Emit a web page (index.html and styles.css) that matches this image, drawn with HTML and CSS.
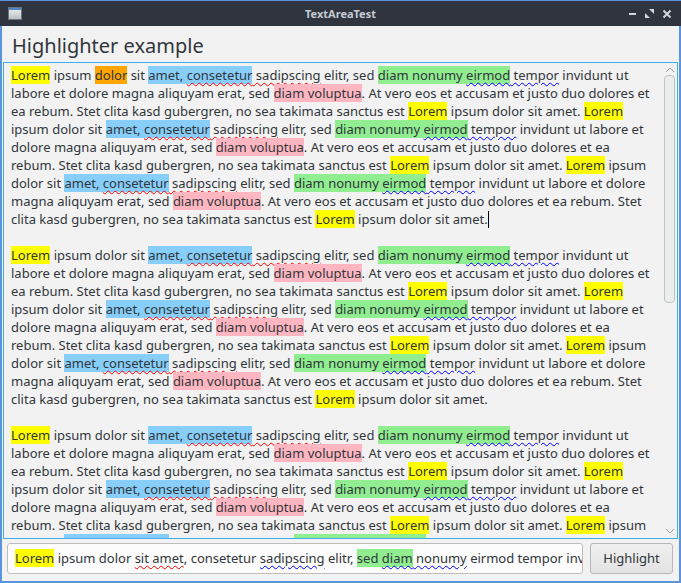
FILE: index.html
```html
<!DOCTYPE html>
<html>
<head>
<meta charset="utf-8">
<link rel="stylesheet" href="styles.css">
</head>
<body>
<div class="window">
  <div class="titlebar">
    <div class="tleft">
      <svg class="appicon" width="14" height="13" viewBox="0 0 14 13">
        <defs><linearGradient id="g" x1="0" y1="0" x2="0" y2="1"><stop offset="0" stop-color="#f4f4f4"/><stop offset="1" stop-color="#b9bcc0"/></linearGradient></defs>
        <rect x="0.5" y="0.5" width="13" height="12" fill="url(#g)" stroke="#6d7480"/>
        <rect x="1" y="1" width="12" height="2" fill="#4f86c6"/>
      </svg>
    </div>
    <div class="title">TextAreaTest</div>
    <div class="wbtns">
      <svg width="9" height="9" viewBox="0 0 9 9"><rect x="1" y="4" width="7" height="2" fill="#d3d7de"/></svg>
      <svg width="9" height="9" viewBox="0 0 9 9"><polygon points="4,0 9,0 9,5" fill="#d3d7de"/><polygon points="0,4 0,9 5,9" fill="#d3d7de"/></svg>
      <svg width="10" height="10" viewBox="0 0 10 10"><path d="M1.5 1.5 L8.5 8.5 M8.5 1.5 L1.5 8.5" stroke="#d3d7de" stroke-width="2"/></svg>
    </div>
  </div>
  <div class="content">
    <h1 class="heading">Highlighter example</h1>
    <div class="textarea">
      <div class="doc">
        <div class="ln"><span class="y">Lorem</span> ipsum <span class="o">dolor</span> sit <span class="b">amet, <span class="sr">consetetur</span></span><span class="sr"> sadipscing</span> elitr, sed <span class="g">diam nonumy <span class="sb">eirmod</span></span><span class="sb"> tempor</span> invidunt ut</div>
        <div class="ln">labore et dolore magna aliquyam erat, sed <span class="p">diam voluptua</span>. At vero eos et accusam et justo duo dolores et</div>
        <div class="ln">ea rebum. Stet clita kasd gubergren, no sea takimata sanctus est <span class="y">Lorem</span> ipsum dolor sit amet. <span class="y">Lorem</span></div>
        <div class="ln">ipsum dolor sit <span class="b">amet, <span class="sr">consetetur</span></span><span class="sr"> sadipscing</span> elitr, sed <span class="g">diam nonumy <span class="sb">eirmod</span></span><span class="sb"> tempor</span> invidunt ut labore et</div>
        <div class="ln">dolore magna aliquyam erat, sed <span class="p">diam voluptua</span>. At vero eos et accusam et justo duo dolores et ea</div>
        <div class="ln">rebum. Stet clita kasd gubergren, no sea takimata sanctus est <span class="y">Lorem</span> ipsum dolor sit amet. <span class="y">Lorem</span> ipsum</div>
        <div class="ln">dolor sit <span class="b">amet, <span class="sr">consetetur</span></span><span class="sr"> sadipscing</span> elitr, sed <span class="g">diam nonumy <span class="sb">eirmod</span></span><span class="sb"> tempor</span> invidunt ut labore et dolore</div>
        <div class="ln">magna aliquyam erat, sed <span class="p">diam voluptua</span>. At vero eos et accusam et justo duo dolores et ea rebum. Stet</div>
        <div class="ln">clita kasd gubergren, no sea takimata sanctus est <span class="y">Lorem</span> ipsum dolor sit amet.<span class="caret"></span></div>
        <div class="ln"> </div>
        <div class="ln"><span class="y">Lorem</span> ipsum dolor sit <span class="b">amet, <span class="sr">consetetur</span></span><span class="sr"> sadipscing</span> elitr, sed <span class="g">diam nonumy <span class="sb">eirmod</span></span><span class="sb"> tempor</span> invidunt ut</div>
        <div class="ln">labore et dolore magna aliquyam erat, sed <span class="p">diam voluptua</span>. At vero eos et accusam et justo duo dolores et</div>
        <div class="ln">ea rebum. Stet clita kasd gubergren, no sea takimata sanctus est <span class="y">Lorem</span> ipsum dolor sit amet. <span class="y">Lorem</span></div>
        <div class="ln">ipsum dolor sit <span class="b">amet, <span class="sr">consetetur</span></span><span class="sr"> sadipscing</span> elitr, sed <span class="g">diam nonumy <span class="sb">eirmod</span></span><span class="sb"> tempor</span> invidunt ut labore et</div>
        <div class="ln">dolore magna aliquyam erat, sed <span class="p">diam voluptua</span>. At vero eos et accusam et justo duo dolores et ea</div>
        <div class="ln">rebum. Stet clita kasd gubergren, no sea takimata sanctus est <span class="y">Lorem</span> ipsum dolor sit amet. <span class="y">Lorem</span> ipsum</div>
        <div class="ln">dolor sit <span class="b">amet, <span class="sr">consetetur</span></span><span class="sr"> sadipscing</span> elitr, sed <span class="g">diam nonumy <span class="sb">eirmod</span></span><span class="sb"> tempor</span> invidunt ut labore et dolore</div>
        <div class="ln">magna aliquyam erat, sed <span class="p">diam voluptua</span>. At vero eos et accusam et justo duo dolores et ea rebum. Stet</div>
        <div class="ln">clita kasd gubergren, no sea takimata sanctus est <span class="y">Lorem</span> ipsum dolor sit amet.</div>
        <div class="ln"> </div>
        <div class="ln"><span class="y">Lorem</span> ipsum dolor sit <span class="b">amet, <span class="sr">consetetur</span></span><span class="sr"> sadipscing</span> elitr, sed <span class="g">diam nonumy <span class="sb">eirmod</span></span><span class="sb"> tempor</span> invidunt ut</div>
        <div class="ln">labore et dolore magna aliquyam erat, sed <span class="p">diam voluptua</span>. At vero eos et accusam et justo duo dolores et</div>
        <div class="ln">ea rebum. Stet clita kasd gubergren, no sea takimata sanctus est <span class="y">Lorem</span> ipsum dolor sit amet. <span class="y">Lorem</span></div>
        <div class="ln">ipsum dolor sit <span class="b">amet, <span class="sr">consetetur</span></span><span class="sr"> sadipscing</span> elitr, sed <span class="g">diam nonumy <span class="sb">eirmod</span></span><span class="sb"> tempor</span> invidunt ut labore et</div>
        <div class="ln">dolore magna aliquyam erat, sed <span class="p">diam voluptua</span>. At vero eos et accusam et justo duo dolores et ea</div>
        <div class="ln">rebum. Stet clita kasd gubergren, no sea takimata sanctus est <span class="y">Lorem</span> ipsum dolor sit amet. <span class="y">Lorem</span> ipsum</div>
        <div class="ln">dolor sit <span class="b">amet, <span class="sr">consetetur</span></span><span class="sr"> sadipscing</span> elitr, sed <span class="g">diam nonumy <span class="sb">eirmod</span></span><span class="sb"> tempor</span> invidunt ut labore et dolore</div>
      </div>
      <div class="scrollbar">
        <svg class="arrow" width="10" height="7" viewBox="0 0 10 7"><path d="M1 6 L5 2 L9 6" fill="none" stroke="#9a9ea3" stroke-width="1"/></svg>
        <div class="track"><div class="handle"></div></div>
        <svg class="arrow" width="10" height="7" viewBox="0 0 10 7"><path d="M1 1 L5 5 L9 1" fill="none" stroke="#9a9ea3" stroke-width="1"/></svg>
      </div>
    </div>
    <div class="bottom">
      <div class="field"><span class="y">Lorem</span> ipsum dolor <span class="sr">sit amet</span>, consetetur <span class="sb">sadipscing</span> elitr, <span class="g">sed <span class="sb">diam</span></span><span class="sb"> nonumy</span> eirmod tempor invidunt</div>
      <div class="button">Highlight</div>
    </div>
  </div>
</div>
</body>
</html>
```
FILE: styles.css
```css
html, body {
  margin: 0;
  padding: 0;
  width: 681px;
  height: 583px;
  overflow: hidden;
  background: #5b93dc;
}
.window {
  width: 681px;
  height: 583px;
  box-sizing: border-box;
  border: 2px solid #5b93dc;
  border-top: 0;
  display: flex;
  flex-direction: column;
  font-family: "Noto Sans", sans-serif;
}
.titlebar {
  height: 26px;
  background: #2f343f;
  display: grid;
  grid-template-columns: 1fr auto 1fr;
  align-items: center;
  margin: 0 -2px;
  padding: 0 8px 0 8px;
  border-top: 1px solid #5b93dc;
  box-sizing: border-box;
}
.tleft { display: flex; align-items: center; }
.appicon { display: block; }
.title {
  text-align: center;
  color: #c5cad3;
  font-size: 11px;
  font-weight: bold;
}
.wbtns {
  display: flex;
  align-items: center;
  justify-content: flex-end;
  gap: 8px;
  padding-right: 1px;
}
.wbtns svg { display: block; }
.content {
  flex: 1;
  background: #f2f2f2;
  display: flex;
  flex-direction: column;
  min-height: 0;
}
.heading {
  margin: 0;
  font-weight: normal;
  font-size: 20px;
  line-height: 27px;
  color: #31363b;
  padding: 6px 0 3px 10px;
}
.textarea {
  margin: 0 1px;
  height: 477px;
  border: 1px solid #3daee9;
  box-sizing: border-box;
  display: flex;
  background: #f2f2f2;
  overflow: hidden;
}
.doc {
  flex: 1;
  padding: 3px 0 0 7px;
  font-size: 13px;
  line-height: 18px;
  color: #31363b;
  overflow: hidden;
}
.ln {
  white-space: pre;
  height: 18px;
}
.y { background: #ffff00; }
.o { background: #ffa500; }
.b { background: #87cefa; }
.g { background: #90ee90; }
.p { background: #ffb6c1; }
.sr {
  text-decoration: underline wavy #ff0000;
  text-decoration-thickness: 1px;
  text-underline-offset: 2px;
}
.sb {
  text-decoration: underline wavy #0000ff;
  text-decoration-thickness: 1px;
  text-underline-offset: 2px;
}
.caret {
  display: inline-block;
  width: 1px;
  height: 17px;
  background: #000;
  vertical-align: -4px;
}
.scrollbar {
  width: 13px;
  display: flex;
  flex-direction: column;
  align-items: center;
  padding: 3px 0 3px 0;
  margin-right: 1px;
}
.arrow { display: block; flex: none; }
.track {
  flex: 1;
  width: 100%;
  padding: 2px 0;
}
.handle {
  height: 228px;
  box-sizing: border-box;
  border: 1px solid #bfc2c5;
  border-radius: 4px;
  background: #eceded;
  margin: 0 1px;
}
.bottom {
  display: flex;
  gap: 7px;
  padding: 4px 6px 0 5px;
  flex: 1;
  align-items: flex-start;
}
.field {
  width: 576px;
  height: 31px;
  box-sizing: border-box;
  background: #fcfcfc;
  border: 1px solid #bcbebf;
  border-radius: 3px;
  font-size: 13px;
  line-height: 29px;
  color: #31363b;
  padding-left: 7px;
  white-space: pre;
  overflow: hidden;
}
.button {
  flex: 1;
  height: 31px;
  box-sizing: border-box;
  border: 1px solid #b6b8ba;
  border-radius: 3px;
  background: linear-gradient(#f0f0f0, #e3e3e3);
  font-size: 13px;
  line-height: 29px;
  text-align: center;
  color: #31363b;
}
```
